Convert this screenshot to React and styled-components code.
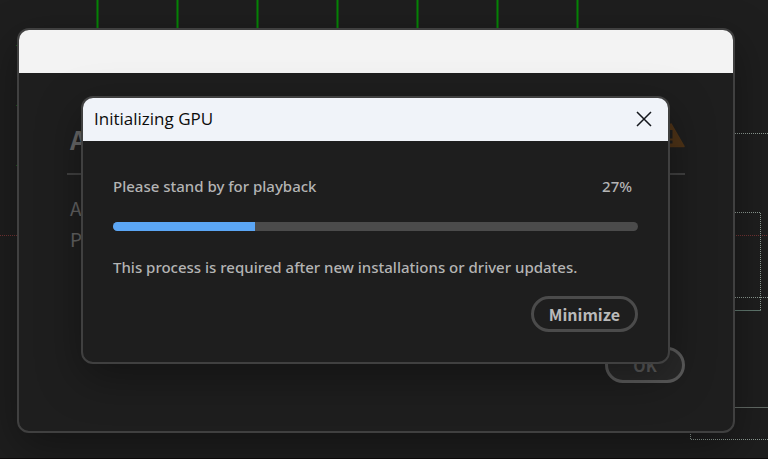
import React, { useState } from 'react'
import styled, { createGlobalStyle } from 'styled-components'

const GlobalStyle = createGlobalStyle`
    * {
        box-sizing: border-box;
    }

    body {
        margin: 0;
        background: #1e1e1e;
        color: #b4b4b4;
        font-family: "Noto Sans CJK SC", "Noto Sans", sans-serif;
    }
`

const Desktop = styled.main`
    position: relative;
    display: grid;
    align-items: center;
    min-height: 100vh;
    padding: 28px 33px 25px 17px;
    overflow: hidden;
    border-bottom: 1px solid #0c0a0a;
`

const Wires = styled.svg`
    position: absolute;
    top: 0;
    left: 0;
    width: 100%;
    height: 100%;
    fill: none;
`

const Window = styled.section`
    position: relative;
    grid-area: 1 / 1;
    border: 2px solid #404040;
    border-radius: 12px;
    background: #1e1e1e;
    overflow: hidden;
    box-shadow: 0 14px 44px rgba(0, 0, 0, 0.36);
`

const FrontWindow = styled(Window)`
    margin: 0 65px 1px 64px;
`

const TitleBar = styled.header`
    display: flex;
    align-items: center;
    justify-content: space-between;
    height: 43px;
    padding: 0 8px 2px 11px;
    background: ${({ $active }) => ($active ? '#f0f3f9' : '#f3f3f3')};
`

const Title = styled.h1`
    margin: 0;
    color: #0c0c0c;
    font-family: "Open Sans", sans-serif;
    font-size: 17px;
    font-weight: 400;
    line-height: 24px;
`

const CloseButton = styled.button`
    display: flex;
    align-items: center;
    justify-content: center;
    width: 32px;
    height: 32px;
    padding: 0;
    border: none;
    background: transparent;
    color: #14161c;
    cursor: pointer;
`

const Alert = styled.div`
    display: flex;
    flex-direction: column;
    padding: 48px;
`

const AlertHead = styled.div`
    display: flex;
    align-items: flex-start;
    justify-content: space-between;
    height: 54px;
    padding-left: 3px;
    border-bottom: 2px solid #404040;
`

const AlertTitle = styled.h2`
    margin: 0;
    color: #666;
    font-size: 26px;
    font-weight: 700;
    line-height: 36px;
`

const AlertLines = styled.div`
    padding: 17px 0 93px 3px;
`

const AlertText = styled.p`
    margin: 0;
    color: #626262;
    font-size: 19px;
    line-height: 31px;
`

const Body = styled.div`
    display: flex;
    flex-direction: column;
    padding: 33px 30px 30px;
`

const Row = styled.div`
    display: flex;
    justify-content: space-between;
    padding-right: 6px;
`

const Text = styled.p`
    margin: 0;
    font-family: "Noto Sans", sans-serif;
    font-size: 15px;
    font-weight: 500;
    line-height: 24px;
`

const Track = styled.div`
    height: 9px;
    margin: 24px 0;
    border-radius: 5px;
    background: #4b4b4b;
    overflow: hidden;
`

const Fill = styled.div`
    height: 100%;
    background: #5ba6f5;
`

const Button = styled.button`
    align-self: flex-end;
    height: 36px;
    min-width: 80px;
    padding: 0 15px;
    border: 3px solid #4b4b4b;
    border-radius: 18px;
    background: transparent;
    color: #b9b9b9;
    font-family: inherit;
    font-size: 16px;
    font-weight: 700;
    line-height: 24px;
    cursor: pointer;
`

const MinimizeButton = styled(Button)`
    margin-top: 17px;
`

const OkButton = styled(Button)`
    border-color: #5a5a5a;
    background: #292929;
    color: #5a5a5a;
`

const greenLines = [97, 177, 257, 337, 417, 497, 577]

const Background = () => (
    <Wires aria-hidden="true">
        {greenLines.map(x => (
            <path key={x} d={`M${x + 0.5} 0V30`} stroke="#058605" strokeWidth="2" />
        ))}
        <path d="M16 45.5H19M16 105.5H19M16 165.5H19" stroke="#1f5c1f" />
        <path d="M0 235.5H2000" stroke="#733333" strokeDasharray="1 1" />
        <g stroke="#8d9a92" strokeDasharray="1 1">
            <path d="M733 133.5H2000" />
            <path d="M733 212.5H760.5V310" />
            <path d="M733 297.5H2000" />
            <path d="M690.5 432V439.5H2000" />
        </g>
        <path d="M733 310.5H761" stroke="#5f766d" />
        <path d="M733 407.5H2000" stroke="#626a65" />
    </Wires>
)

const WarningIcon = () => (
    <svg width="28" height="27" viewBox="0 0 28 27" aria-hidden="true">
        <path d="M14 3L27 25.5H1Z" fill="#4e3317" stroke="#4e3317" strokeWidth="1.5" strokeLinejoin="round" />
        <path d="M14 9V17.5M14 19.5V22.5" stroke="#1e1e1e" strokeWidth="3" />
    </svg>
)

const CloseIcon = () => (
    <svg width="16" height="16" viewBox="0 0 16 16" aria-hidden="true">
        <path d="M1 1L15 15M15 1L1 15" stroke="currentColor" strokeWidth="1.5" fill="none" />
    </svg>
)

const App = () => {
    const [progress] = useState(27)

    return (
        <>
            <GlobalStyle />
            <Desktop>
                <Background />
                <Window>
                    <TitleBar />
                    <Alert>
                        <AlertHead>
                            <AlertTitle>A</AlertTitle>
                            <WarningIcon />
                        </AlertHead>
                        <AlertLines>
                            <AlertText>A</AlertText>
                            <AlertText>Pl</AlertText>
                        </AlertLines>
                        <OkButton type="button">OK</OkButton>
                    </Alert>
                </Window>
                <FrontWindow role="dialog" aria-labelledby="gpu-title">
                    <TitleBar $active>
                        <Title id="gpu-title">Initializing GPU</Title>
                        <CloseButton type="button" aria-label="Close">
                            <CloseIcon />
                        </CloseButton>
                    </TitleBar>
                    <Body>
                        <Row>
                            <Text id="gpu-status">Please stand by for playback</Text>
                            <Text>{progress}%</Text>
                        </Row>
                        <Track role="progressbar" aria-labelledby="gpu-status" aria-valuenow={progress} aria-valuemin={0} aria-valuemax={100}>
                            <Fill style={{ width: `${progress}%` }} />
                        </Track>
                        <Text>This process is required after new installations or driver updates.</Text>
                        <MinimizeButton type="button">Minimize</MinimizeButton>
                    </Body>
                </FrontWindow>
            </Desktop>
        </>
    )
}

export default App
